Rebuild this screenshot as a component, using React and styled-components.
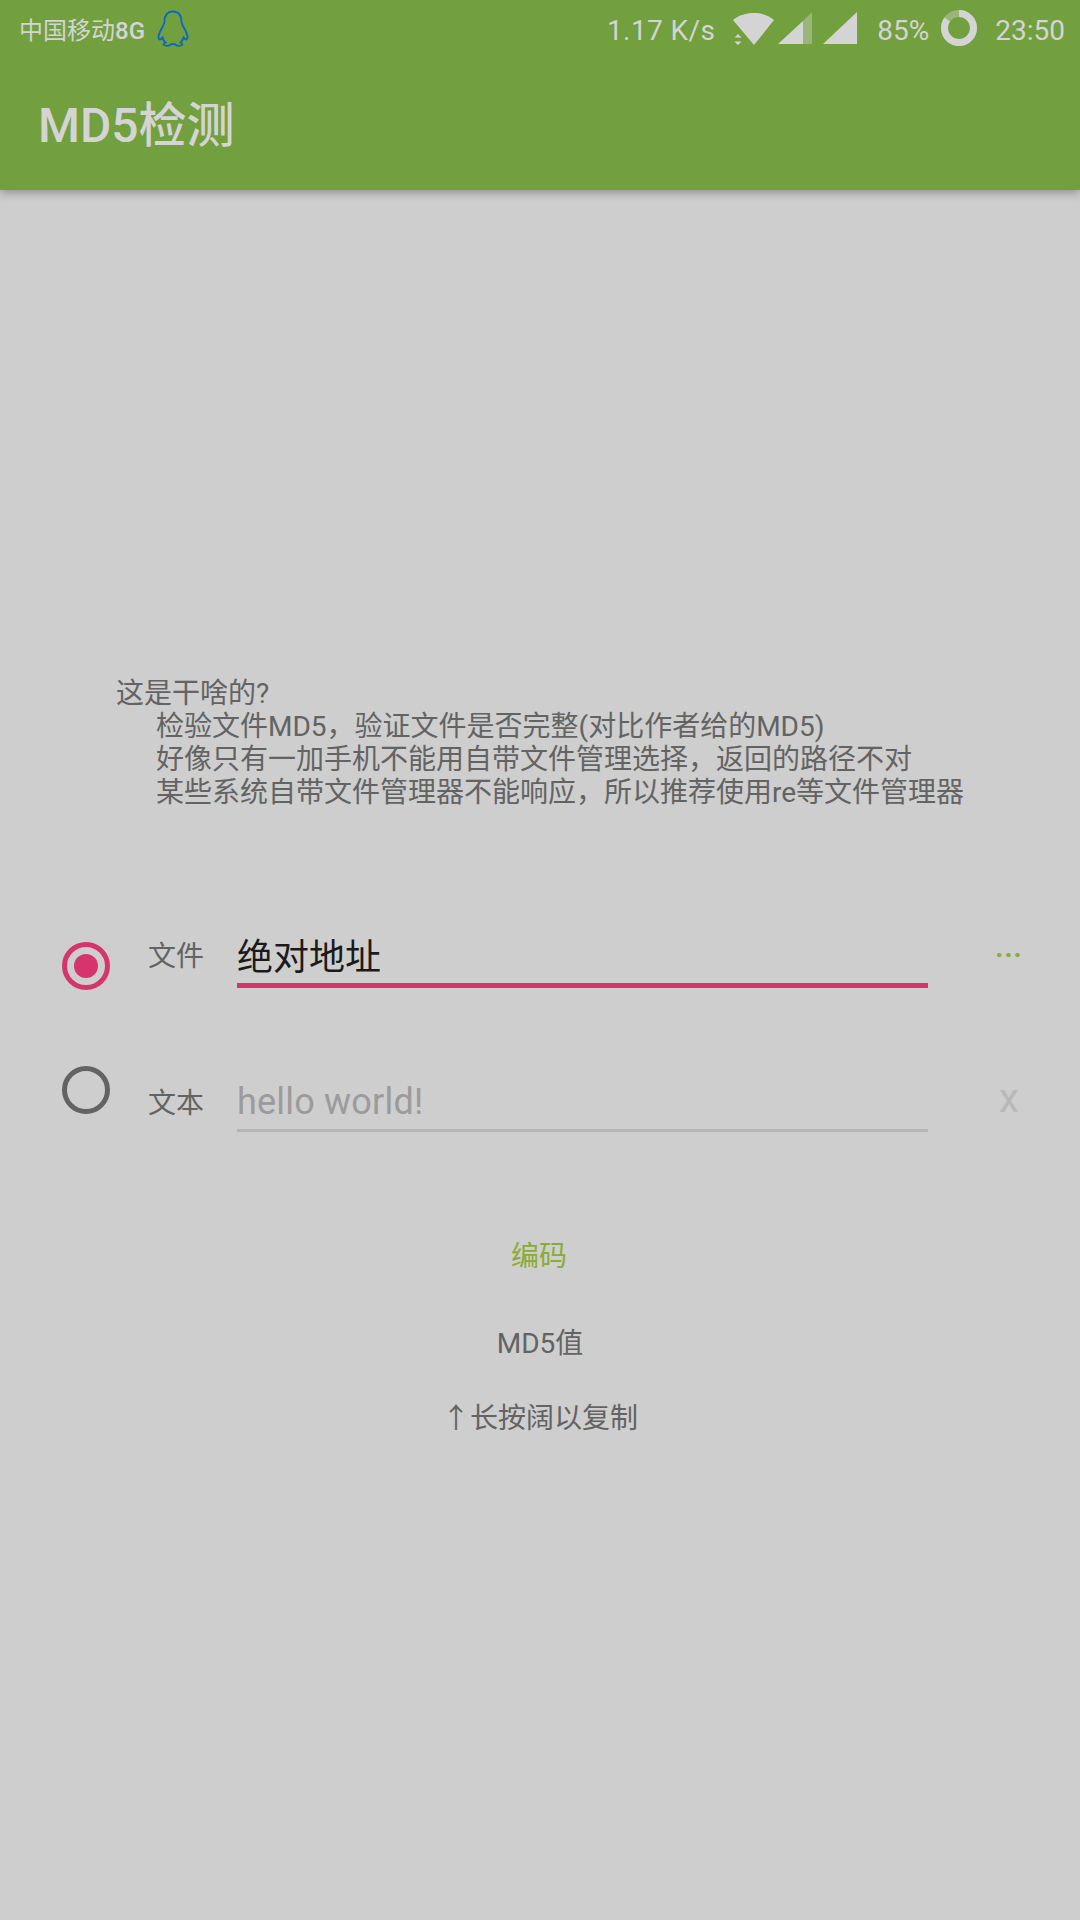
import React from 'react'
import styled, { createGlobalStyle } from 'styled-components'

const FONT = `Roboto, "Noto Sans CJK SC", sans-serif`
const ON_BAR = '#d4d4d4'
const PINK = '#d5356c'
const GREEN = '#8aab36'
const GREY = '#636363'

const GlobalStyle = createGlobalStyle`
  html, body {
    margin: 0;
    padding: 0;
    background: #cecece;
  }
  body {
    font-family: ${FONT};
  }
`

const Page = styled.div`
  width: 1080px;
  height: 1920px;
  overflow: hidden;
  background: #cecece;
  display: flex;
  flex-direction: column;
`

const Header = styled.header`
  height: 190px;
  flex: none;
  background: #72a03e;
  box-shadow: 0 2px 10px rgba(0, 0, 0, 0.35);
  color: ${ON_BAR};
`

const StatusBar = styled.div`
  height: 56px;
  display: flex;
  align-items: center;
  justify-content: space-between;
  padding: 0 15px 0 19px;
`

const StatusGroup = styled.div`
  display: flex;
  align-items: center;
`

const Carrier = styled.span`
  font-size: 24px;
  margin-right: 12px;

  b {
    font-weight: 500;
  }
`

const Speed = styled.span`
  font-size: 28px;
  letter-spacing: 0.4px;
  padding-top: 5px;
  margin-right: 18px;
`

const StatusText = styled.span`
  font-size: 28px;
  padding-top: 5px;
  margin: 0 ${p => p.$right}px 0 0;
`

const StatusIcon = styled.svg`
  display: block;
  flex: none;
  margin-right: ${p => p.$right || 0}px;
`

const Title = styled.h1`
  margin: 0;
  padding: 35px 0 0 38px;
  font-size: 48px;
  line-height: 70px;
  font-weight: 500;
`

const Main = styled.main`
  flex: 1;
  padding-top: 487px;
`

const Notes = styled.div`
  padding-left: 116px;
  font-size: 28px;
  line-height: 33px;
  color: ${GREY};
`

const NoteLine = styled.div`
  padding-left: ${p => (p.$indent ? 40 : 0)}px;
  white-space: nowrap;
`

const Form = styled.div`
  display: flex;
  margin-top: 117px;
  padding-left: 62px;
`

const RadioColumn = styled.div`
  width: 86px;
  flex: none;
  padding-top: 16px;
  display: flex;
  flex-direction: column;
  gap: 76px;
`

const Radio = styled.span`
  width: 48px;
  height: 48px;
  box-sizing: border-box;
  border-radius: 50%;
  border: 5px solid ${p => (p.$checked ? PINK : GREY)};
  display: flex;
  align-items: center;
  justify-content: center;

  &::after {
    content: '';
    display: ${p => (p.$checked ? 'block' : 'none')};
    width: 24px;
    height: 24px;
    border-radius: 50%;
    background: ${PINK};
  }
`

const Fields = styled.div`
  display: flex;
  flex-direction: column;
  gap: 88px;
`

const Field = styled.div`
  display: flex;
  align-items: flex-start;
`

const FieldLabel = styled.label`
  width: 89px;
  flex: none;
  font-size: 28px;
  padding-top: ${p => (p.$active ? 6 : 0)}px;
  line-height: ${p => (p.$active ? 49 : 55)}px;
  color: ${GREY};
`

const FieldInput = styled.div`
  width: 691px;
  box-sizing: border-box;
  font-size: 36px;
  letter-spacing: ${p => (p.$active ? 0 : 0.2)}px;
  padding-top: ${p => (p.$active ? 7 : 0)}px;
  line-height: ${p => (p.$active ? 50 : 53)}px;
  color: ${p => (p.$active ? '#1a1a1a' : '#9b9b9b')};
  border-bottom: ${p => (p.$active ? `5px solid ${PINK}` : '3px solid #b5b5b5')};
`

const FieldAction = styled.button`
  width: 88px;
  flex: none;
  margin-left: 37px;
  padding: ${p => (p.$clear ? 0 : 2)}px 0 0;
  border: 0;
  background: none;
  text-align: center;
  font-family: ${FONT};
  font-size: ${p => (p.$clear ? 40 : 28)}px;
  font-weight: ${p => (p.$clear ? 400 : 700)};
  line-height: ${p => (p.$clear ? 46 : 40)}px;
  letter-spacing: ${p => (p.$clear ? 0 : 1)}px;
  color: ${p => (p.$clear ? '#b8b8b8' : GREEN)};
`

const Results = styled.div`
  margin-top: 105px;
  display: flex;
  flex-direction: column;
  align-items: center;
  font-size: 28px;
  line-height: 40px;
  color: ${GREY};
`

const EncodeButton = styled.button`
  padding: 0 2px 0 0;
  border: 0;
  background: none;
  font-family: ${FONT};
  font-size: 28px;
  line-height: 40px;
  color: ${GREEN};
  margin-bottom: 47px;
`

const CopyHint = styled.div`
  margin-top: 35px;
  word-spacing: -7px;
`

const QQIcon = () => (
  <StatusIcon width="32" height="37" viewBox="0 0 32 36" fill="none" stroke="#0a66c8" strokeWidth="1.8">
    <path d="M16 1C9.5 1 7.5 6 7.5 11C7.5 13 7 14 5.5 16.5C3.5 20 2 23 1.5 26C1.5 28 2 29 3 29C4 29 5 27.5 5.5 27C6 29 7 31 8.5 32C6.5 33 6 34.5 8 35C10 35.5 13 35 14.5 33.5C15.5 33.7 16.5 33.7 17.5 33.5C19 35 22 35.5 24 35C26 34.5 25.5 33 23.5 32C25 31 26 29 26.5 27C27 27.5 28 29 29 29C30 29 30.5 28 30.5 26C30 23 28.5 20 26.5 16.5C25 14 24.5 13 24.5 11C24.5 6 22.5 1 16 1Z" />
  </StatusIcon>
)

const WifiIcon = () => (
  <StatusIcon $right={4} width="41" height="36" viewBox="0 0 41 36" fill={ON_BAR}>
    <path d="M0 10C6 5 13 3 20.5 3C28 3 35 5 41 10L21 35Z" />
    <path d="M5 24L8.500 27.500H1.500ZM5 35L1.500 31.500H8.500Z" />
  </StatusIcon>
)

const SignalIcon = ({ weak, right }) => (
  <StatusIcon $right={right} width="34" height="36" viewBox="0 0 34 36" fill={ON_BAR}>
    {weak ? (
      <>
        <path d="M0 34L25 11V34Z" />
        <path d="M25 11L34 2V34H25Z" opacity="0.4" />
      </>
    ) : (
      <path d="M0 34L34 2V34Z" />
    )}
  </StatusIcon>
)

const BatteryRing = () => (
  <StatusIcon $right={18} width="36" height="36" viewBox="0 0 36 36" fill="none" strokeWidth="7">
    <circle cx="18" cy="18" r="14.500" stroke={ON_BAR} opacity="0.4" />
    <circle
      cx="18"
      cy="18"
      r="14.500"
      stroke={ON_BAR}
      pathLength="100"
      strokeDasharray="85 15"
      transform="rotate(-90 18 18)"
    />
  </StatusIcon>
)

export default function App() {
  return (
    <Page>
      <GlobalStyle />
      <Header>
        <StatusBar>
          <StatusGroup>
            <Carrier>中国移动<b>8G</b></Carrier>
            <QQIcon />
          </StatusGroup>
          <StatusGroup>
            <Speed>1.17 K/s</Speed>
            <WifiIcon />
            <SignalIcon weak right={11} />
            <SignalIcon right={20} />
            <StatusText $right={12}>85%</StatusText>
            <BatteryRing />
            <StatusText $right={0}>23:50</StatusText>
          </StatusGroup>
        </StatusBar>
        <Title>MD5检测</Title>
      </Header>
      <Main>
        <Notes>
          <NoteLine>这是干啥的?</NoteLine>
          <NoteLine $indent>检验文件MD5，验证文件是否完整(对比作者给的MD5)</NoteLine>
          <NoteLine $indent>好像只有一加手机不能用自带文件管理选择，返回的路径不对</NoteLine>
          <NoteLine $indent>某些系统自带文件管理器不能响应，所以推荐使用re等文件管理器</NoteLine>
        </Notes>
        <Form>
          <RadioColumn>
            <Radio $checked />
            <Radio />
          </RadioColumn>
          <Fields>
            <Field>
              <FieldLabel $active>文件</FieldLabel>
              <FieldInput $active>绝对地址</FieldInput>
              <FieldAction>...</FieldAction>
            </Field>
            <Field>
              <FieldLabel>文本</FieldLabel>
              <FieldInput>hello world!</FieldInput>
              <FieldAction $clear>x</FieldAction>
            </Field>
          </Fields>
        </Form>
        <Results>
          <EncodeButton>编码</EncodeButton>
          <div>MD5值</div>
          <CopyHint>↑ 长按阔以复制</CopyHint>
        </Results>
      </Main>
    </Page>
  )
}
